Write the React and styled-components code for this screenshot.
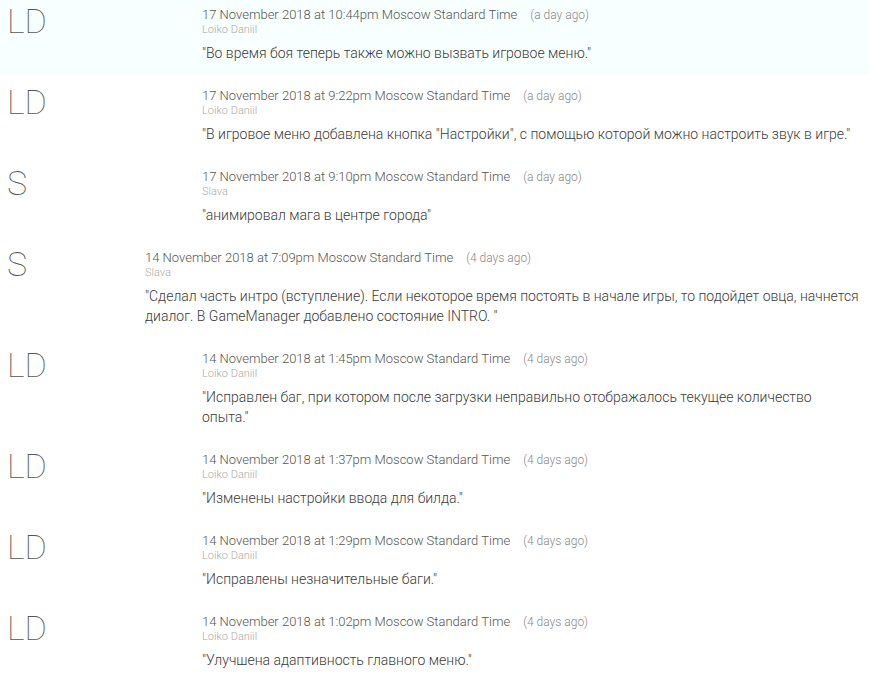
import React from "react";
import styled, { createGlobalStyle } from "styled-components";

const GlobalStyle = createGlobalStyle`
  body {
    margin: 0;
    background: #ffffff;
    font-family: Roboto, "Liberation Sans", sans-serif;
  }
`;

const List = styled.div`
  display: flex;
  flex-direction: column;
`;

const Row = styled.div`
  display: flex;
  align-items: flex-start;
  padding: 6px 0 12px 0;
  margin-bottom: 6px;
  background: ${(p) => (p.highlight ? "#f7ffff" : "transparent")};
`;

const Avatar = styled.div`
  width: 145px;
  flex-shrink: 0;
  padding: 1px 0 0 7px;
  box-sizing: border-box;
  font-size: 34px;
  font-weight: 100;
  line-height: 28px;
  color: #555;
`;

const Body = styled.div`
  flex: 1;
  margin-left: ${(p) => (p.flat ? "0" : "57px")};
  padding-right: 8px;
`;

const Meta = styled.div`
  height: 17px;
  font-size: 13px;
  line-height: 17px;
  font-weight: 300;
  color: #555;
  white-space: nowrap;
`;

const Ago = styled.span`
  margin-left: 13px;
  font-size: 12px;
  line-height: 1;
  color: #888;
`;

const Author = styled.div`
  font-size: 11px;
  line-height: 14px;
  font-weight: 300;
  color: #aaa;
`;

const Message = styled.div`
  margin-top: 6px;
  font-size: 14px;
  line-height: 20px;
  font-weight: 300;
  color: #3a3a3a;
`;

const entries = [
  { initials: "LD", date: "17 November 2018 at 10:44pm Moscow Standard Time", ago: "(a day ago)", author: "Loiko Daniil", text: '"Во время боя теперь также можно вызвать игровое меню."', highlight: true },
  { initials: "LD", date: "17 November 2018 at 9:22pm Moscow Standard Time", ago: "(a day ago)", author: "Loiko Daniil", text: '"В игровое меню добавлена кнопка "Настройки", с помощью которой можно настроить звук в игре."' },
  { initials: "S", date: "17 November 2018 at 9:10pm Moscow Standard Time", ago: "(a day ago)", author: "Slava", text: '"анимировал мага в центре города"' },
  { initials: "S", date: "14 November 2018 at 7:09pm Moscow Standard Time", ago: "(4 days ago)", author: "Slava", text: '"Сделал часть интро (вступление). Если некоторое время постоять в начале игры, то подойдет овца, начнется диалог. В GameManager добавлено состояние INTRO. "', flat: true },
  { initials: "LD", date: "14 November 2018 at 1:45pm Moscow Standard Time", ago: "(4 days ago)", author: "Loiko Daniil", text: '"Исправлен баг, при котором после загрузки неправильно отображалось текущее количество опыта."' },
  { initials: "LD", date: "14 November 2018 at 1:37pm Moscow Standard Time", ago: "(4 days ago)", author: "Loiko Daniil", text: '"Изменены настройки ввода для билда."' },
  { initials: "LD", date: "14 November 2018 at 1:29pm Moscow Standard Time", ago: "(4 days ago)", author: "Loiko Daniil", text: '"Исправлены незначительные баги."' },
  { initials: "LD", date: "14 November 2018 at 1:02pm Moscow Standard Time", ago: "(4 days ago)", author: "Loiko Daniil", text: '"Улучшена адаптивность главного меню."' },
];

function Commit({ entry }) {
  return (
    <Row highlight={entry.highlight}>
      <Avatar>{entry.initials}</Avatar>
      <Body flat={entry.flat}>
        <Meta>
          {entry.date}
          <Ago>{entry.ago}</Ago>
        </Meta>
        <Author>{entry.author}</Author>
        <Message>{entry.text}</Message>
      </Body>
    </Row>
  );
}

export default function App() {
  return (
    <>
      <GlobalStyle />
      <List>
        {entries.map((e, i) => (
          <Commit key={i} entry={e} />
        ))}
      </List>
    </>
  );
}
